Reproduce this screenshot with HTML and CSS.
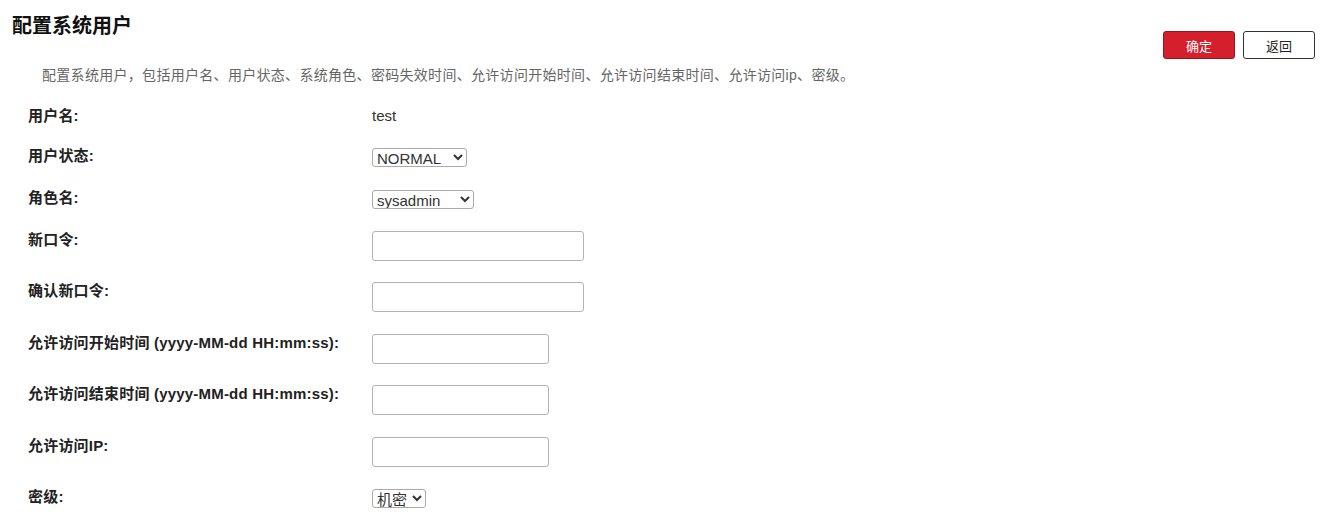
FILE: index.html
```html
<!DOCTYPE html>
<html lang="zh-CN">
<head>
  <meta charset="UTF-8"/>
  <title>配置系统用户</title>
  <link rel="stylesheet" href="styles.css">
</head>
<body>
  <div class="page-head">
    <h2>配置系统用户</h2>
    <div class="actions">
      <button class="btn btn-primary">确定</button>
      <button class="btn">返回</button>
    </div>
  </div>
  <p class="desc">配置系统用户，包括用户名、用户状态、系统角色、密码失效时间、允许访问开始时间、允许访问结束时间、允许访问ip、密级。</p>

  <table class="form-table">
    <tr>
      <td class="label">用户名:</td>
      <td class="value">test</td>
    </tr>
    <tr class="sel-row">
      <td class="label">用户状态:</td>
      <td class="value">
        <select class="sel-status"><option>NORMAL</option><option>LOCKED</option></select>
      </td>
    </tr>
    <tr class="sel-row">
      <td class="label">角色名:</td>
      <td class="value">
        <select class="sel-role"><option>sysadmin</option><option>secadmin</option></select>
      </td>
    </tr>
    <tr class="in-row">
      <td class="label">新口令:</td>
      <td class="value"><input type="password" class="in-wide"></td>
    </tr>
    <tr class="in-row">
      <td class="label">确认新口令:</td>
      <td class="value"><input type="password" class="in-wide"></td>
    </tr>
    <tr class="in-row">
      <td class="label">允许访问开始时间 (yyyy-MM-dd HH:mm:ss):</td>
      <td class="value"><input type="text" class="in-short"></td>
    </tr>
    <tr class="in-row">
      <td class="label">允许访问结束时间 (yyyy-MM-dd HH:mm:ss):</td>
      <td class="value"><input type="text" class="in-short"></td>
    </tr>
    <tr class="in-row">
      <td class="label">允许访问IP:</td>
      <td class="value"><input type="text" class="in-short"></td>
    </tr>
    <tr class="sel-row">
      <td class="label">密级:</td>
      <td class="value">
        <select class="sel-level"><option>机密</option><option>秘密</option></select>
      </td>
    </tr>
  </table>
</body>
</html>
```

FILE: styles.css
```css
* { box-sizing: border-box; }
body {
  margin: 0;
  font-family: "Liberation Sans", Arial, "Noto Sans CJK SC", sans-serif;
  color: #222;
  background: #fff;
}
.page-head {
  display: flex; justify-content: space-between; align-items: flex-start;
  padding: 0 8px 0 12px;
}
.page-head h2 {
  margin: 14px 0 0; font-size: 20px; line-height: 24px; font-weight: bold; color: #111;
}
.actions { display: flex; gap: 8px; margin-top: 31px; }
.btn {
  width: 72px; height: 28px; padding: 0;
  font-family: inherit; font-size: 13px; color: #222;
  background: #fff; border: 1px solid #333; border-radius: 3px; cursor: pointer;
}
.btn-primary { background: #d51f2c; border-color: #8a1a20; color: #fff; }
.desc {
  margin: 6px 0 0; padding-left: 42px;
  font-size: 14px; line-height: 20px; letter-spacing: 0.3px; color: #666;
}
.form-table {
  border-collapse: collapse; margin: 11px 0 0 28px;
}
.form-table td { padding: 11px 0 10.5px; vertical-align: top; }
.label {
  width: 344px; font-size: 15px; line-height: 18px; font-weight: bold;
  letter-spacing: 0.2px; color: #222;
}
.value { font-size: 15px; line-height: 18px; color: #333; }
select {
  height: 19px; padding: 0; margin-top: 1px;
  font-family: inherit; font-size: 15px; color: #333;
  border: 1px solid #aaa; border-radius: 3px; background: #fff;
}
.sel-row td { padding-bottom: 10px; }
.sel-status { width: 95px; }
.sel-role { width: 102px; }
.sel-level { width: 54px; }
input {
  height: 30px; display: block; padding: 0 6px;
  font-family: inherit; font-size: 14px;
  border: 1px solid #b3b3b3; border-radius: 3px; background: #fff;
}
.in-wide { width: 212px; }
.in-short { width: 177px; }
```
